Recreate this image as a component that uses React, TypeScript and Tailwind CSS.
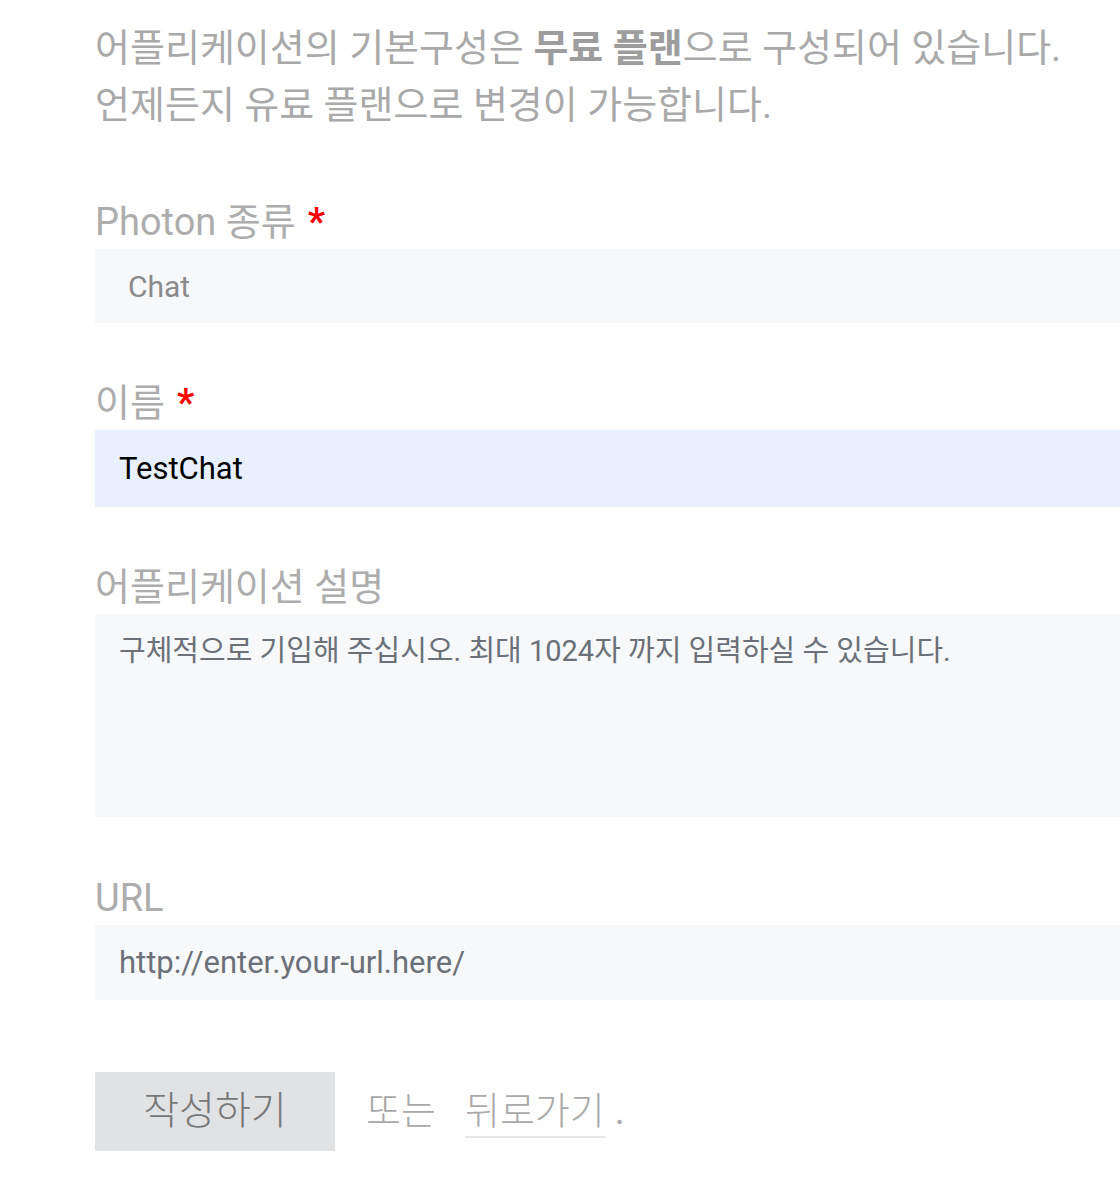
import type { ReactNode } from "react";

const FONT = "font-['Roboto','Noto_Sans_CJK_KR',sans-serif]";

const Label = ({ children, required }: { children: ReactNode; required?: boolean }) => (
  <div className="h-[54px] text-[38px] leading-[54px] text-[#adadad] whitespace-nowrap">
    {children}
    {required && <span className="ml-3 font-bold text-[#ff0000]">*</span>}
  </div>
);

export default function App() {
  return (
    <div className={`${FONT} min-h-[1198px] w-[1120px] overflow-hidden bg-white pl-[95px] pt-[20px]`}>
      <p className="text-[38px] leading-[57px] text-[#a9a9a9] whitespace-nowrap">
        어플리케이션의 기본구성은 <b className="font-bold text-[#9d9d9d]">무료 플랜</b>으로 구성되어 있습니다.
        <br />
        언제든지 유료 플랜으로 변경이 가능합니다.
      </p>

      <form className="mt-[61px] w-[1100px]">
        <div>
          <Label required>Photon 종류</Label>
          <select
            defaultValue="chat"
            className="h-[74px] w-full appearance-none bg-[#f7f8fa] pl-[33px] text-[30px] text-[#8a8a8a] outline-none"
          >
            <option value="chat">Chat</option>
          </select>
        </div>

        <div className="mt-[53px]">
          <Label required>이름</Label>
          <input
            defaultValue="TestChat"
            className="h-[77px] w-full bg-[#e8f0fe] pl-6 text-[31px] text-black outline-none"
          />
        </div>

        <div className="mt-[53px]">
          <Label>어플리케이션 설명</Label>
          <textarea
            placeholder="구체적으로 기입해 주십시오. 최대 1024자 까지 입력하실 수 있습니다."
            className="block h-[203px] w-full resize-none bg-[#f7f8fa] pl-6 pt-[16px] text-[29px] leading-[42px] outline-none placeholder:text-[#6b7079]"
          />
        </div>

        <div className="mt-[54px]">
          <Label>URL</Label>
          <input
            placeholder="http://enter.your-url.here/"
            className="h-[75px] w-full bg-[#f7f8fa] pl-6 text-[31px] outline-none placeholder:text-[#6b7079]"
          />
        </div>

        <div className="mt-[72px] flex items-center">
          <button
            type="button"
            className="h-[79px] w-[240px] bg-[#e1e2e4] text-[39px] font-light text-[#777777]"
          >
            작성하기
          </button>
          <span className="ml-[31px] text-[38px] font-light text-[#a9a9a9]">또는</span>
          <a className="ml-[29px] border-b-2 border-[#e6e6e6] text-[38px] font-light leading-[50px] text-[#a9a9a9]">
            뒤로가기
          </a>
          <span className="ml-[10px] text-[38px] text-[#a9a9a9]">.</span>
        </div>
      </form>
    </div>
  );
}
